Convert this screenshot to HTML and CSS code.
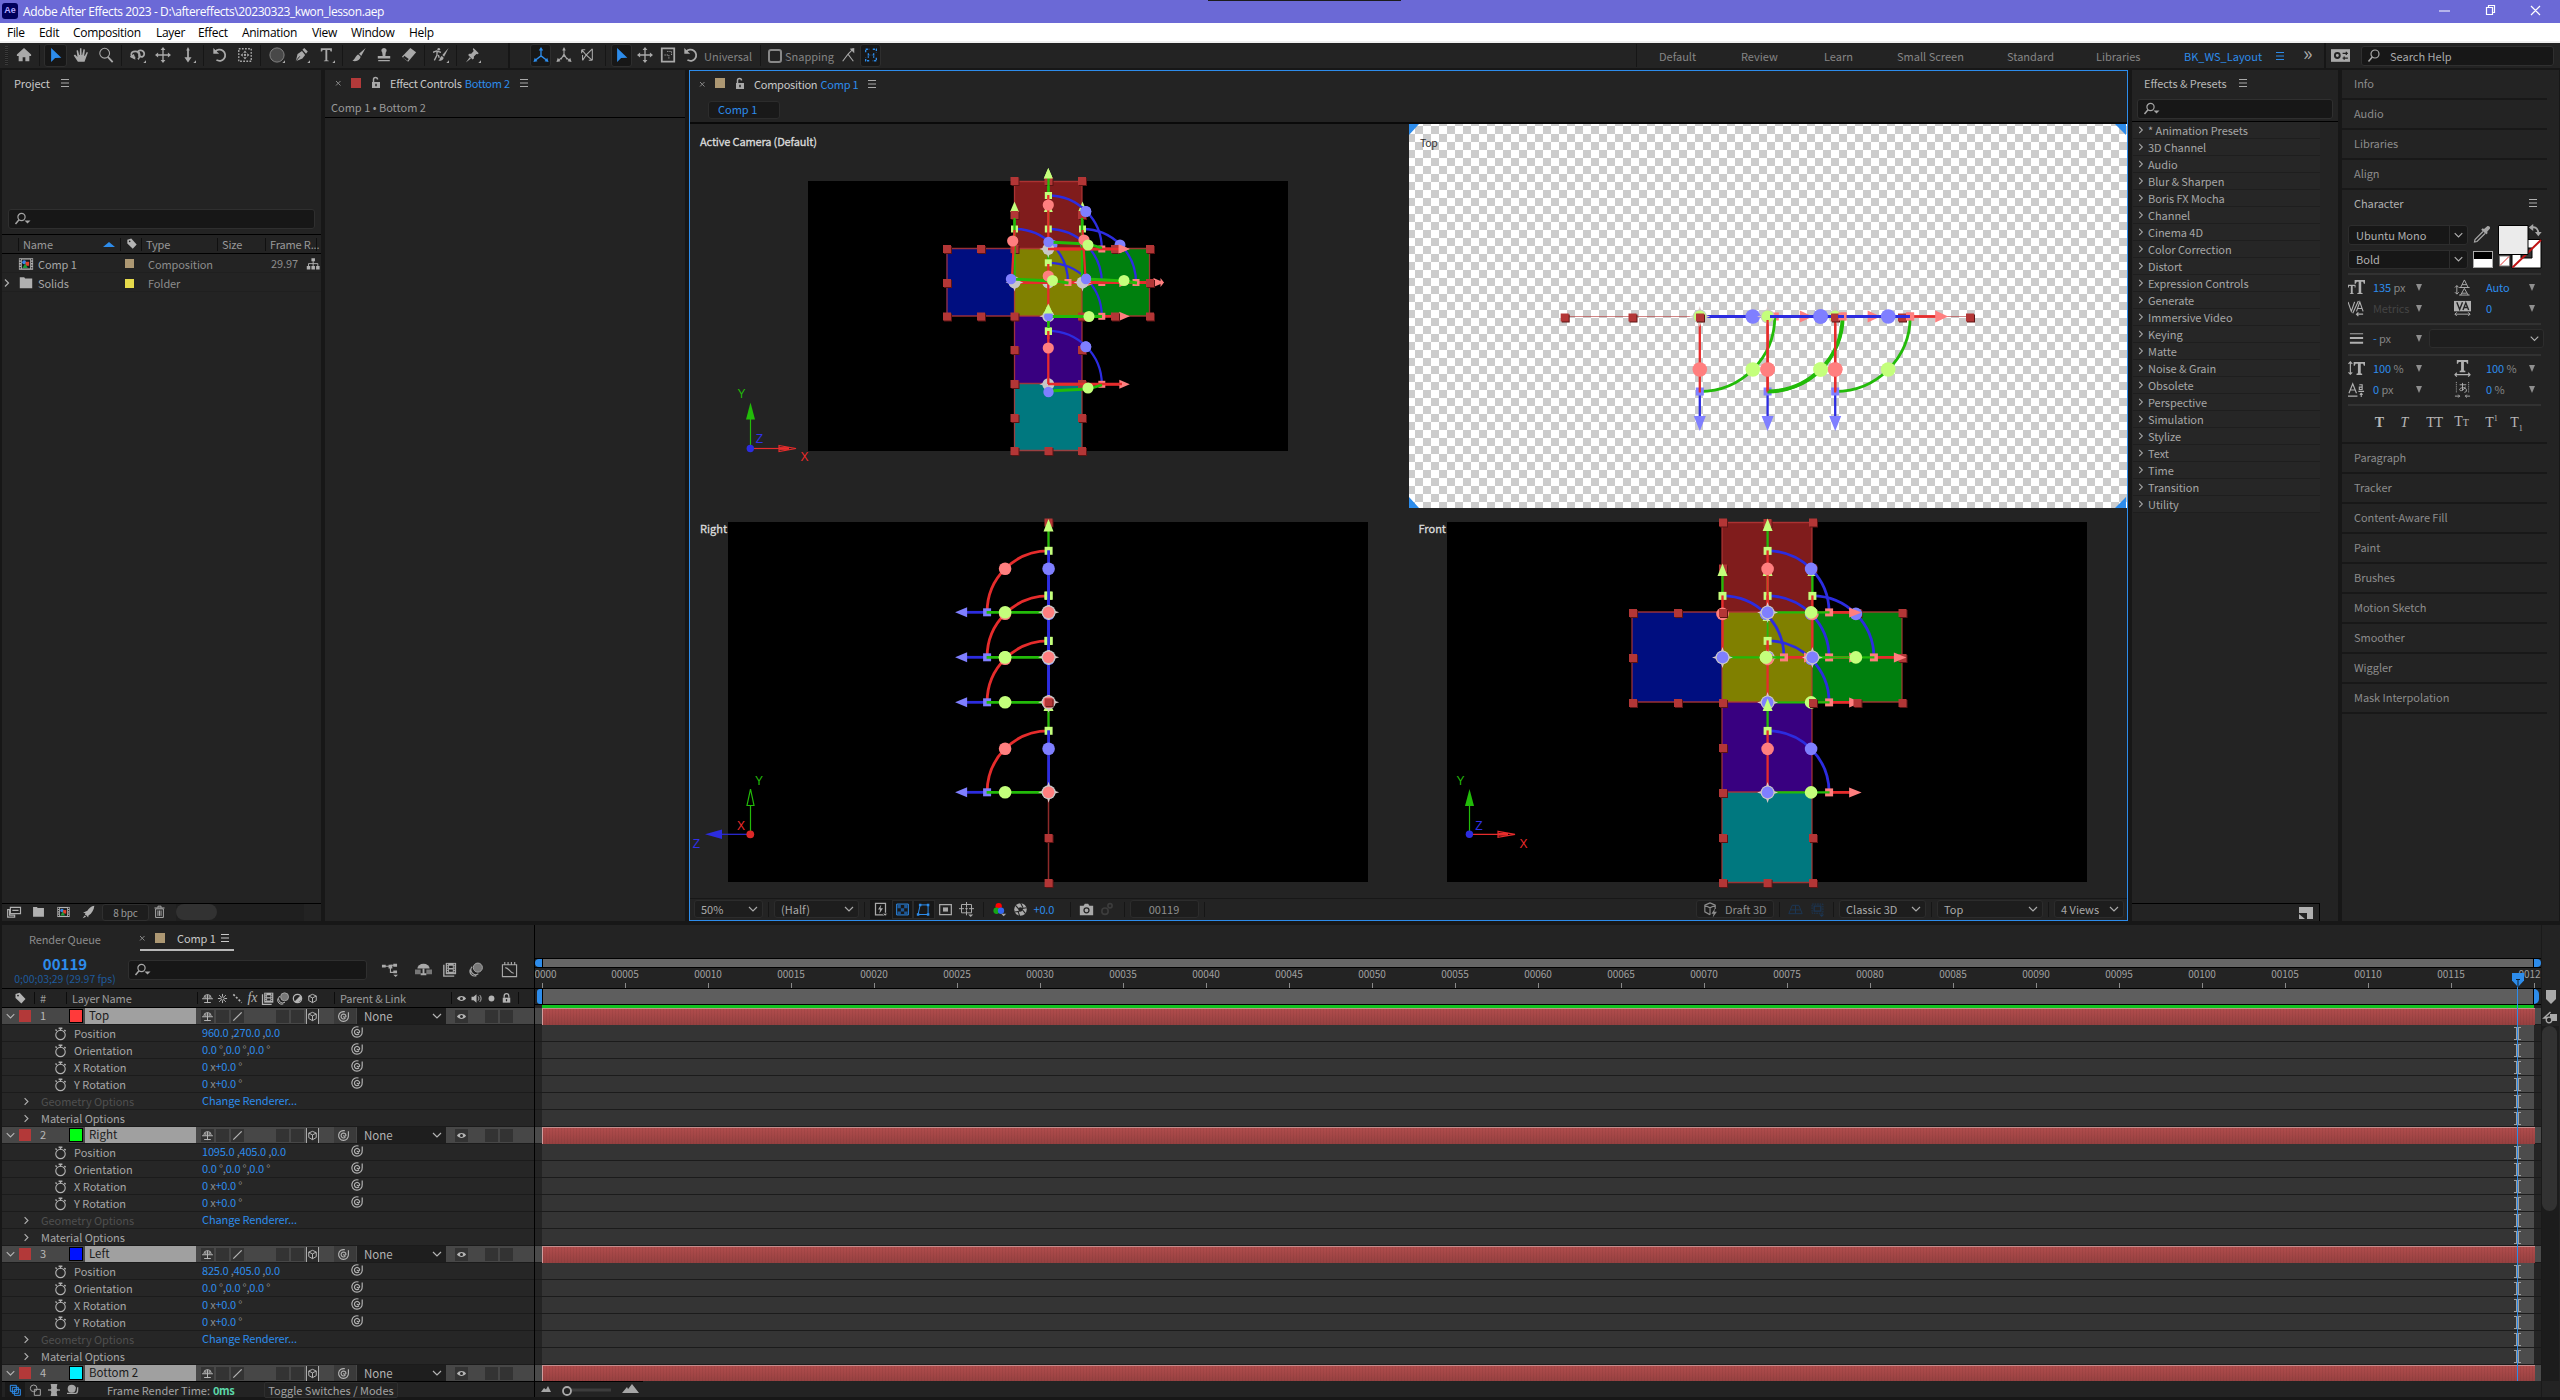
FILE: index.html
```html
<!DOCTYPE html>
<html lang="en">
<head>
<meta charset="utf-8">
<title>Adobe After Effects 2023</title>
<link rel="stylesheet" href="styles.css">
</head>
<body>
<svg class="defs" aria-hidden="true">
<defs>
<symbol id="menu" viewBox="0 0 18 18"><path d="M5 5.500h8M5 9h8M5 12.500h8" class="s"/></symbol>
<symbol id="chev-d" viewBox="0 0 18 18"><path d="M5 7l4 4 4-4" class="s w12"/></symbol>
<symbol id="chev-r" viewBox="0 0 18 18"><path d="M7 5.500l3.500 3.500L7 12.500" class="s w12"/></symbol>
<symbol id="x" viewBox="0 0 18 18"><path d="M7 7l4.500 4.500M11.500 7L7 11.500" class="s"/></symbol>
<symbol id="unlock" viewBox="0 0 18 18"><path d="M5 8h8v6H5z" class="f"/><path d="M6.500 8V5.500a2 2 0 0 1 4 0" class="s w15"/><path d="M9 9.800v2.500" stroke="#232323" stroke-width="1.500"/></symbol>
<symbol id="lock" viewBox="0 0 18 18"><path d="M4.500 8h9v6h-9z" class="f"/><path d="M6.200 8V6a2.800 2.800 0 0 1 5.600 0v2" class="s w15"/><path d="M9 9.800v2.500" stroke="#232323" stroke-width="1.500"/></symbol>
<symbol id="search" viewBox="0 0 18 18"><circle cx="8.500" cy="7" r="3.600" class="s w12"/><path d="M6 9.800L2.500 14" class="s w15"/><path d="M11.500 10.500h6l-3 3z" class="f"/></symbol>
<symbol id="search2" viewBox="0 0 18 18"><circle cx="10" cy="7" r="4" class="s w12"/><path d="M7.300 10L3.500 14.500" class="s w15"/></symbol>
<symbol id="home" viewBox="0 0 18 18"><path d="M9 1L1 8.500V10h2v6h4.500v-4.500h3V16H15v-6h2V8.500z" class="f"/></symbol>
<symbol id="arrow" viewBox="0 0 18 18"><path d="M3.500 1v16l4.500-4.500L15 12z" class="f"/></symbol>
<symbol id="hand" viewBox="0 0 18 18"><path d="M5.500 16.500L.8 9.500l1.500-1L5 11.300 4 4l1.600-.3L7 9h.6L7.800 1.500h1.700L9.700 9h.6l1.500-6.500 1.600.4L12.600 9.700l.6.300 2.200-4.500 1.400.7-2.300 6.300-1.500 4z" class="f"/></symbol>
<symbol id="zoom" viewBox="0 0 18 18"><circle cx="7.500" cy="7" r="5.500" class="s w12"/><path d="M11 11l5.500 6" class="s w2"/></symbol>
<symbol id="orbit" viewBox="0 0 18 18"><path d="M6 12C0 12 0 5 6 5s6 6 3 9M9 7c-1-5 7-4 7 1 0 3-3 4-5 2" class="s w2"/><path d="M10 5v6M4 9l-3 2 4 2z" class="s w15"/><path d="M18 18h-3l3-3z" class="f"/></symbol>
<symbol id="move" viewBox="0 0 18 18"><path d="M9 2v14M2 9h14" class="s w15"/><path d="M9 0L6.300 3.500h5.400zM9 18l-2.700-3.500h5.400zM0 9l3.500-2.700v5.400zM18 9l-3.500-2.700v5.400z" class="f"/></symbol>
<symbol id="dolly" viewBox="0 0 18 18"><path d="M9 3v10" class="s w2"/><path d="M9 17.500L5 11.500h8zM9 0L7 4h4zM18 18h-3l3-3z" class="f"/></symbol>
<symbol id="rotate" viewBox="0 0 18 18"><path d="M3.500 5.500A6.300 6.300 0 1 1 5 14.500" class="s w2"/><path d="M1.500 1v6.500H8z" class="f"/></symbol>
<symbol id="panb" viewBox="0 0 18 18"><path d="M2 2h14v14H2z" class="s w15" stroke-dasharray="2 1.500"/><path d="M9 4l2 2.500H7zM9 14l2-2.500H7zM4 9l2.500-2v4zM14 9l-2.500-2v4z" class="f"/><circle cx="9" cy="9" r="1.300" class="f"/></symbol>
<symbol id="ellipse" viewBox="0 0 18 18"><circle cx="9" cy="9" r="8" fill="#484848" stroke="#8a8a8a"/><path d="M18 18h-3l3-3z" class="f"/></symbol>
<symbol id="pen" viewBox="0 0 18 18"><path d="M2 16l2-8 5-3.500L12.500 9 9.500 13z" class="f"/><path d="M9.500 3l2-2 4 4-2 2.500z" class="f"/><path d="M2 16l4.500-5.500" stroke="#232323"/><path d="M18 18h-3l3-3z" class="f"/></symbol>
<symbol id="type" viewBox="0 0 18 18"><path d="M2 1.500h12.500V5H13l-.6-1.700H9.300v11.500l1.700.6V16H5.500v-.6l1.700-.6V3.300H4.100L3.500 5H2zM18 18h-3l3-3z" class="f"/></symbol>
<symbol id="brush" viewBox="0 0 18 18"><path d="M16.500 1L9 7.500l2.500 2.500zM8.300 8.500c-3 .5-3 5-6.800 7C7 17 10.500 14 10.800 11z" class="f"/></symbol>
<symbol id="stamp" viewBox="0 0 18 18"><path d="M9 1a3 3 0 0 1 2 5.200L10.500 10H16v3H2v-3h5.500L7 6.200A3 3 0 0 1 9 1zM2.500 14.500h13V16h-13z" class="f"/></symbol>
<symbol id="eraser" viewBox="0 0 18 18"><path d="M10.500 1L17 6 8 16.500 1 11z" class="f"/><path d="M3 11l5 3.500" stroke="#232323" stroke-width="2.500"/></symbol>
<symbol id="roto" viewBox="0 0 18 18"><path d="M17.500 1L10.500 9l2 2zM10 10c-2 .5-2 4-4 5.500 3 .5 6-1.500 6-3.500zM18 18h-3l3-3z" class="f"/><circle cx="6.500" cy="2.500" r="1.500" class="f"/><path d="M0 6l4-1.500L9 6M4.500 5v4L1.500 15M6 9l1 3" class="s w15"/></symbol>
<symbol id="pin" viewBox="0 0 18 18"><path d="M9.500 1l6 6-1.500 1.200-1.200-.4-2.800 3V13L8.500 14.200 3.500 9l1.300-1.500H7l2.800-3-1-1.700zM5.200 11.500l1.500 1.500L1 17.500zM18 18h-3l3-3z" class="f"/></symbol>
<symbol id="axis" viewBox="0 0 18 18"><path d="M9 10V3M9 10l-6.500 5M9 10l6.500 5" class="s w15"/><path d="M9 0L6.500 4h5zM.5 17l1.500-5 3 4zM17.500 17L16 12l-3 4z" class="f"/></symbol>
<symbol id="axis2" viewBox="0 0 18 18"><path d="M9 10V2M9 10l-6.500 5M9 10l6.500 5M9 8L5.500 14M9 8l3.500 6" class="s w12"/><path d="M9 0L7 4h4zM.5 17L2 12l3 4zM17.500 17L16 12l-3 4z" class="f"/></symbol>
<symbol id="axis3" viewBox="0 0 18 18"><path d="M3 3l5 6-4 6M15 2l-7 7 7 6M3 3h4M3 3v4M15 2v13M11 15h4M4 15V9" class="s w12"/></symbol>
<symbol id="scale" viewBox="0 0 18 18"><path d="M2 1.500h14v15H2z" class="s w2"/><path d="M5 9h5v5M8 5h5v4" class="s" stroke-dasharray="1.500 1"/></symbol>
<symbol id="snap1" viewBox="0 0 18 18"><path d="M3 16l6-8 6 8M9 8l6-6" class="s w12"/><path d="M16 1v6l-5-5z" class="f"/></symbol>
<symbol id="snap2" viewBox="0 0 18 18"><path d="M3 6V2.500h4M11 2.500h4V6M15 12v3.500h-4M7 15.500H3V12M6 7v2h2M12 7v2h-2M6 12v-1.500M12 12v-1.500" class="s w15" stroke-dasharray="2.500 1"/></symbol>
<symbol id="wsicon" viewBox="0 0 18 18"><path d="M0 3h18v12H0z" class="f"/><circle cx="6" cy="9" r="2.300" fill="none" stroke="#232323" stroke-width="1.800"/><path d="M11 7h5M11 11.500h5M14.500 5.500v3M12.500 10v3" stroke="#232323" stroke-width="1.200"/></symbol>
<symbol id="tag" viewBox="0 0 18 18"><path d="M3 3.500L8 2l7 7.500-5 5.500L3 8.500z" class="f"/><circle cx="6" cy="5.500" r="1.100" fill="#232323"/></symbol>
<symbol id="flow" viewBox="0 0 18 18"><path d="M7 1.500h4.500v4H7zM1 11.500h4.500v4.500H1zM7 11.500h4.500v4.500H7zM13 11.500h4.500v4.500H13z" class="f"/><path d="M9.200 5v7M3.200 12V8.500h12V12" class="s w12"/></symbol>
<symbol id="film" viewBox="0 0 18 18"><path d="M1 2.500h16v13H1z" class="f"/><path d="M2.500 3.500v11M15.500 3.500v11" stroke="#232323" stroke-width="1.300" stroke-dasharray="1.500 1.500"/><path d="M4.300 4h9.400v10H4.300z" fill="#1a1a1a"/><circle cx="7" cy="7" r="2.200" fill="#3a86e8"/><path d="M8.500 6.500h4v4.500h-4z" fill="#e0402a"/><path d="M8 8.500l3 5H5z" fill="#1c9a3c"/></symbol>
<symbol id="folder" viewBox="0 0 18 18"><path d="M2 2.500h5l1 1.500h8v11H2z" class="f"/></symbol>
<symbol id="interp" viewBox="0 0 18 18"><path d="M5 3h13v8H5z" class="s w15"/><path d="M7.500 7h8M1.500 6v9.500h9V13H4V6z" class="s w15"/></symbol>
<symbol id="rocket" viewBox="0 0 18 18"><path d="M16.500 1c-4 .5-7 3-9 6.500L2 10l3 .5L4.500 13l2 .5 2 2.500.5-2.500C13.500 11 16 6 16.500 1zM4 13.500L1.500 17 6 15z" class="f"/></symbol>
<symbol id="trash" viewBox="0 0 18 18"><path d="M4 5h10v11H4zM2.500 3.800h13M7 3.500v-2h4v2M7 7v7M9 7v7M11 7v7" class="s w12"/></symbol>
<symbol id="shy" viewBox="0 0 18 18"><path d="M4.500 8.800a4.500 4.500 0 0 1 9 0M2.500 9.300h13M9 4.500v10M5 13.800h8M7 9V6M11 9V6" class="s w12"/></symbol>
<symbol id="shyb" viewBox="0 0 18 18"><path d="M2.500 8a6.500 5 0 0 1 13 0z" class="f"/><path d="M0 9h6v5H0zM12 9h6v5h-6z" fill="#777"/><path d="M9 8v6M6 14h6" class="s w2"/></symbol>
<symbol id="sun" viewBox="0 0 18 18"><circle cx="9" cy="9" r="2" class="s w12"/><path d="M9 3.500v3M9 11.500v3M3.500 9h3M11.500 9h3M5 5l2 2M11 11l2 2M5 13l2-2M11 7l2-2" class="s w12"/></symbol>
<symbol id="dash" viewBox="0 0 18 18"><path d="M4 4l10 10" class="s w2" stroke-dasharray="2.500 2"/></symbol>
<symbol id="slash" viewBox="0 0 18 18"><path d="M4 14L14 4" class="s w15"/></symbol>
<symbol id="frames" viewBox="0 0 18 18"><path d="M5 2h11v12H5z" class="f"/><path d="M7 3v10M14 3v10" stroke="#232323" stroke-dasharray="1.500 1"/><path d="M8.500 5h4v2.500h-4zM8.500 9h4v2.500h-4z" fill="#232323"/><path d="M3 4v12h11" class="s w15"/></symbol>
<symbol id="blur" viewBox="0 0 18 18"><circle cx="11.500" cy="7" r="4.800" fill="#777" stroke="#aaa"/><path d="M5.500 6a5 5 0 0 0 6.500 7.500M3.500 9a5 5 0 0 0 6.500 6.500" class="s w12"/></symbol>
<symbol id="adj" viewBox="0 0 18 18"><circle cx="9" cy="9" r="5" class="s w15"/><path d="M12.500 5.500a5 5 0 0 1-7 7z" class="f"/></symbol>
<symbol id="cube" viewBox="0 0 18 18"><path d="M9 4l4.500 2v5.500L9 14l-4.500-2.500V6zM4.500 6L9 8.300 13.500 6M9 8.300V14" class="s w12"/></symbol>
<symbol id="eye" viewBox="0 0 18 18"><path d="M3.500 9C6 5 12 5 14.500 9 12 13 6 13 3.500 9z" class="f"/><circle cx="9" cy="9" r="1.800" fill="#282828"/></symbol>
<symbol id="speaker" viewBox="0 0 18 18"><path d="M3 7h2.500L9 4v10L5.500 11H3z" class="f"/><path d="M11 6.500c1 1 1 4 0 5M13 5c2 2 2 6 0 8" class="s w12"/></symbol>
<symbol id="dot" viewBox="0 0 18 18"><circle cx="9" cy="9" r="3.500" class="f"/></symbol>
<symbol id="spiral" viewBox="0 0 18 18"><path d="M10.500 4A5.200 5.200 0 1 0 14.200 8.500V4.500M11 10.800a2.600 2.600 0 1 1 .6-2.300c.1 1.700-2.500 1.700-2.500.3" class="s w12"/></symbol>
<symbol id="watch" viewBox="0 0 18 18"><circle cx="9" cy="10.500" r="5" class="s w12"/><path d="M7 3.500h4M9 3.500V6M13 5.500l1.500 1M5 6L3.700 4.800" class="s w15"/></symbol>
<symbol id="graph" viewBox="0 0 18 18"><path d="M1.500 4h15v12.500h-15zM4 4V1M7.500 4V1M11 4V1M14.500 4V1M4.500 7c4 0 5 6 9 6" class="s w12"/></symbol>
<symbol id="mini" viewBox="0 0 18 18"><path d="M3 5.500h7M10 6V12h5M10 4.500h6" class="s w12"/><path d="M1 4h4v3H1zM8 4h4v4H8zM13 3h4v3h-4zM13 10h4v3h-4zM13 14.500h5l-2.500 2.500z" class="f"/></symbol>
<symbol id="fast" viewBox="0 0 18 18"><path d="M3 1.500h12v14H3z" class="s w15"/><path d="M10 3L6 9h2.500L7.500 14l4.500-6.500H9z" class="f"/><path d="M11 13.500h7l-3.500 3.500z" class="f" stroke="#171717"/></symbol>
<symbol id="checkers" viewBox="0 0 18 18"><path d="M2 2.500h14v13H2z" class="s w12"/><path d="M3 3.500h4v4H3zM11 3.500h4v4h-4zM7 7.500h4v4H7zM3 11.500h4v3.500H3zM11 11.500h4v3.500h-4z" fill="#1d5796"/></symbol>
<symbol id="maskv" viewBox="0 0 18 18"><path d="M2.500 15L5 3.500h9.500V15z" class="s w12"/><path d="M1 13.500h3v3H1zM3.500 2h3v3h-3zM13 2h3v3h-3zM13 13.500h3v3h-3z" class="f"/></symbol>
<symbol id="roi" viewBox="0 0 18 18"><path d="M2 3h14v12H2z" class="s w15"/><path d="M6 6.500h6v5H6z" class="f"/></symbol>
<symbol id="grid" viewBox="0 0 18 18"><path d="M3 3h12v10H3zM9 0v6M9 10v6M0 8h6M12 8h6M7.500 8h3M9 6.500v3" class="s w12"/><path d="M11 15h6l-3 3z" class="f"/></symbol>
<symbol id="rgb" viewBox="0 0 18 18"><circle cx="8" cy="5" r="3.800" fill="#f00"/><circle cx="5.500" cy="10.500" r="3.800" fill="#16a616"/><circle cx="10.800" cy="10.500" r="3.800" fill="#3566ee"/><path d="M11 14h6l-3 3z" class="f"/></symbol>
<symbol id="aperture" viewBox="0 0 18 18"><circle cx="9" cy="9" r="7.500" class="f"/><path d="M9 1l3 6M16 7l-6.500 1M15 14l-4-5M8 17l-2-6M2 12l6-1M3 4l4 4.500" stroke="#232323" stroke-width="1.300"/><circle cx="9" cy="9" r="2.600" fill="#232323"/></symbol>
<symbol id="camera" viewBox="0 0 18 18"><path d="M1 4.500h4.500L7 2h4l1.500 2.500H17V16H1z" class="f"/><circle cx="9" cy="10" r="3" fill="none" stroke="#232323" stroke-width="1.500"/></symbol>
<symbol id="snapview" viewBox="0 0 18 18"><circle cx="6" cy="11" r="3.800" class="s w2"/><circle cx="12" cy="4.500" r="2.500" class="s w2"/></symbol>
<symbol id="draft" viewBox="0 0 18 18"><path d="M8.500 2.500L14 5v4M8.500 2.500L3 5v7l5.500 3M3 5l5.500 2.700L14 5M8.500 7.700V15" class="s w12"/><path d="M14 8l-4 6h2.300l-1 4 4.500-6H13z" class="f"/></symbol>
<symbol id="floor" viewBox="0 0 18 18"><path d="M5 4h8l4 10H1zM9 4v10M3 9.500h12" class="s w12"/></symbol>
<symbol id="ext" viewBox="0 0 18 18"><path d="M2.500 2.500h13v11h-13z" class="s w12" stroke-dasharray="2 1"/><path d="M5 5h8v6H5z" class="s w15"/><path d="M11 15h6l-3 3z" class="f"/></symbol>
<symbol id="dropper" viewBox="0 0 18 18"><path d="M11 4l3.500-3a2 2 0 0 1 2.500 2.500L14 7l.8 1-1.600 1.300-5-4.500L9.700 3.300z" class="f"/><path d="M10 6.500l-8 8L1.500 17l2.500-.5 8-8" class="s w12"/></symbol>
<symbol id="swap" viewBox="0 0 18 18"><path d="M6 5c4-1 7 2 6.500 7" class="s w2"/><path d="M2 5l5-4v8zM9 10h7.500L12.700 15z" class="f"/></symbol>
<symbol id="copyb" viewBox="0 0 18 18"><path d="M2 2h9v9H2zM5 5h9v9H5zM8 8h9v9H8z" class="s w15"/></symbol>
<symbol id="over" viewBox="0 0 18 18"><circle cx="7" cy="6.500" r="5" class="s w15"/><path d="M8 8h9v9H8z" class="s w15"/></symbol>
<symbol id="brace" viewBox="0 0 18 18"><path d="M4 0h10l-1 6 1.500 3L13 12l1 6H4l1-6L3.500 9 5 6z" class="f"/><path d="M0 9h18" class="s w2"/></symbol>
<symbol id="snail" viewBox="0 0 18 18"><circle cx="7" cy="7" r="6" class="f"/><path d="M0 14h13c3 0 3-3 3-9M12 4v3" class="s w2"/></symbol>
<symbol id="tT" viewBox="0 0 18 18"><path d="M0 6h8v3H7V7.500H5V15h1v1H2v-1h1V7.500H1V9H0zM7 1h11v4h-1.200L16 3h-2v11.500l1.500.5v1H9.800v-1l1.500-.5V3h-2L8.200 5H7z" class="f"/></symbol>
<symbol id="va" viewBox="0 0 18 18"><path d="M0 2l3.500 10L7 2M11 1L5 14M9 12l3.500-10L16 12M10 9h5M9 15h7M11 13l-2 2 2 2" class="s w12"/></symbol>
<symbol id="leading" viewBox="0 0 18 18"><path d="M7 9l4-8 4 8M8.500 6h5M7 17l4-7 4 7M8.500 15h5M5.500 9h11M5.500 17h11M3 7v9M1 9l2-2 2 2M1 14l2 2 2-2" class="s"/></symbol>
<symbol id="track" viewBox="0 0 18 18"><path d="M0 1h18v11H0z" class="f"/><path d="M3 2.500l3 7.500 3-7.500M9.500 10.500l3-7.500 3 7.500M10.500 8h4" stroke="#232323" fill="none" stroke-width="1.500"/><path d="M1 15h16M3 13l-2 2 2 2M15 13l2 2-2 2" class="s"/></symbol>
<symbol id="lines" viewBox="0 0 18 18"><path d="M2 4h14" class="s"/><path d="M2 8.500h14M2 13.500h14" class="s w2"/></symbol>
<symbol id="vscale" viewBox="0 0 18 18"><path d="M2.500 2v13M.5 4l2-2 2 2M.5 13l2 2 2-2" class="s w12"/><path d="M6 2h12v4h-1.200L16 4h-2.500v10l1.500.5V16H9v-1.500l1.500-.5V4H8L7.200 6H6z" class="f"/></symbol>
<symbol id="hscale" viewBox="0 0 18 18"><path d="M3 0h12v4h-1.200L13 2h-2.500v9l1.500.5V13H6v-1.500l1.500-.5V2H5l-.8 2H3z" class="f"/><path d="M1 15.500h16M3 13.500l-2 2 2 2M15 13.500l2 2-2 2" class="s w12"/></symbol>
<symbol id="base" viewBox="0 0 18 18"><path d="M1 13L5 3l4 10M2.500 9.500h5M0 16h10M12 4h3v5h-3V6.500h3M11 11h6M14 17v-4M12.500 14.500L14 13l1.500 1.500" class="s w12"/></symbol>
<symbol id="tsume" viewBox="0 0 18 18"><path d="M6 4h7M9 2v8M12 6c-2 5-6 5-6 3s6-3 7 0-2 3-2 3" class="s"/><path d="M2.500 1v12M15.500 1v12" class="s" stroke-dasharray="1 1"/><path d="M1 16h5M17 16h-5M4.500 14.500L6 16l-1.500 1.500M13.500 14.500L12 16l1.500 1.500" class="s"/></symbol>
<g id="org"><path d="M0-10.500L1.500-6H-1.500zM0 10.500L1.500 6H-1.500zM-10.500 0L-6-1.500V1.500zM10.500 0L6-1.500V1.500z" fill="#d9c6c6"/><circle r="7" fill="#c8c8c8"/></g>
<g id="hd"><path d="M-3-3h8v8h-8z" fill="#5c1414"/><path d="M-4-4h8v8h-8z" fill="#b33636"/></g>
<g id="gzf">
<path d="M0-61.500V-83" class="g2"/><path d="M-5-81.500L0-94 5-81.500z" class="lime"/>
<path d="M0-61.500A61.500 61.500 0 0 1 61.500 0" class="b3"/>
<path d="M61.500 0H83" class="r3"/><path d="M81.500-5L94 0 81.500 5z" class="pink"/>
<path d="M-4-65.500h8v8h-8z" class="lime"/><path d="M57.500-4h8v8h-8z" class="pink"/>
<path d="M0-62V0" class="r2"/><path d="M0 0H62" class="g2"/>
<circle cy="-43.500" r="6.300" class="pink"/><circle cx="43.500" cy="-43.500" r="6.300" class="peri"/><circle cx="43.500" r="6.300" class="lime"/>
<use href="#org"/><circle r="5.800" class="peri"/></g>
<g id="gzr">
<path d="M0-61.500A61.500 61.500 0 0 0-61.500 0" class="r3"/>
<path d="M-61.500 0H-83" class="b3"/><path d="M-81.500-5L-93.500 0-81.500 5z" class="peri"/>
<path d="M-4-65.500h8v8h-8z" class="lime"/><path d="M-65.500-4h8v8h-8z" class="peri"/>
<path d="M0-62V0" class="b3"/><path d="M0 0H-62" class="g3"/>
<circle cx="-43.500" cy="-43.500" r="6.300" class="pink"/><circle cy="-43.500" r="6.300" class="peri"/><circle cx="-43.500" r="6.300" class="lime"/>
<use href="#org"/><circle r="5.800" class="pink"/></g>
<g id="gzt">
<path d="M75 0H102" class="r3"/><path d="M100-6L113 0 100 6z" class="pink"/><path d="M71-4h8v8h-8z" class="pink"/>
<path d="M0 75A75 75 0 0 0 75 0" class="g3"/>
<path d="M0 75V100" class="b2"/><path d="M-6 99.500L0 114.500 6 99.500z" class="peri"/><path d="M-4 71h8v8h-8z" class="peri"/>
<path d="M0 0V76" class="r2"/><path d="M0 0H76" class="b3"/>
<circle cy="53" r="7.300" class="pink"/><circle cx="53" cy="53" r="7.300" class="lime"/><circle cx="53" r="7.300" class="peri"/>
<use href="#org"/><circle r="6" class="lime"/></g>
<g id="gzc">
<path d="M0-53.500V-72" class="g2"/><path d="M-4.500-70.500L0-81 4.500-70.500z" class="lime"/>
<path d="M0-53.500A53.500 53.500 0 0 1 53.500 0" class="b2"/>
<path d="M0 0H72" class="r3"/><path d="M71-4.500L81.500 0 71 4.500z" class="pink"/>
<path d="M-3.500-57h7v7h-7z" class="lime"/><path d="M50-3.500h7v7h-7z" class="pink"/>
<circle cx="37.500" cy="-37.500" r="5.500" class="peri"/><use href="#org" transform="scale(.85)"/></g>
</defs>
</svg>

<header class="titlebar">
  <span class="ae">Ae</span>
  <span class="title">Adobe After Effects 2023 - D:\aftereffects\20230323_kwon_lesson.aep</span>
  <span class="topmark"></span>
  <svg class="winbtns" viewBox="0 0 110 20"><path d="M4 11h11M51.500 7.500h6v7h-6zM53.500 7V5.500h6v7H58M96 6l9 9M105 6l-9 9" fill="none" stroke="#fff" stroke-width="1.200"/></svg>
</header>
<nav class="menubar"><span class="m1">File</span><span class="m2">Edit</span><span class="m3">Composition</span><span class="m4">Layer</span><span class="m5">Effect</span><span class="m6">Animation</span><span class="m7">View</span><span class="m8">Window</span><span>Help</span></nav>

<div class="toolbar">
  <span class="grip"></span>
  <span class="tool first"><svg><use href="#home"/></svg></span><i class="sep"></i>
  <span class="tool on"><svg><use href="#arrow"/></svg></span><span class="tool"><svg><use href="#hand"/></svg></span><span class="tool"><svg><use href="#zoom"/></svg></span><i class="sep"></i>
  <span class="tool"><svg><use href="#orbit"/></svg></span><span class="tool"><svg><use href="#move"/></svg></span><span class="tool"><svg><use href="#dolly"/></svg></span><i class="sep"></i>
  <span class="tool"><svg><use href="#rotate"/></svg></span><span class="tool"><svg><use href="#panb"/></svg></span><i class="sep"></i>
  <span class="tool"><svg><use href="#ellipse"/></svg></span><span class="tool"><svg><use href="#pen"/></svg></span><span class="tool"><svg><use href="#type"/></svg></span><i class="sep"></i>
  <span class="tool"><svg><use href="#brush"/></svg></span><span class="tool"><svg><use href="#stamp"/></svg></span><span class="tool"><svg><use href="#eraser"/></svg></span><i class="sep"></i>
  <span class="tool"><svg><use href="#roto"/></svg></span><i class="sep"></i>
  <span class="tool"><svg><use href="#pin"/></svg></span><i class="sep far"></i>
  <span class="tool sm on axisbox"><svg><use href="#axis"/></svg></span><span class="tool sm"><svg><use href="#axis2"/></svg></span><span class="tool sm"><svg><use href="#axis3"/></svg></span><i class="sep mid"></i>
  <span class="tool sm on"><svg><use href="#arrow"/></svg></span><span class="tool sm"><svg><use href="#move"/></svg></span><span class="tool sm"><svg><use href="#scale"/></svg></span><span class="tool sm"><svg><use href="#rotate"/></svg></span>
  <span class="tlabel univ">Universal</span><i class="sep"></i>
  <span class="check"></span><span class="tlabel snapl">Snapping</span>
  <span class="tool sm"><svg><use href="#snap1"/></svg></span><span class="tool sm on"><svg><use href="#snap2"/></svg></span>
  <div class="spaces"><span class="w1">Default</span><span class="w2">Review</span><span class="w3">Learn</span><span class="w4">Small Screen</span><span class="w5">Standard</span><span class="w6">Libraries</span><span class="w7 blue">BK_WS_Layout</span><svg class="blue"><use href="#menu"/></svg><span class="more">»</span></div>
  <span class="wsi"><svg><use href="#wsicon"/></svg></span>
  <div class="helpbox"><svg><use href="#search2"/></svg><span>Search Help</span></div>
</div>

<main class="work">
  <section class="panel project">
    <div class="tabs"><span class="pl">Project</span><svg class="icon"><use href="#menu"/></svg></div>
    <div class="searchbox"><svg><use href="#search"/></svg></div>
    <div class="pgrid phead"><span></span><span class="vb">Name</span><span class="sortcell"><i class="sort"></i></span><span class="vb"><svg><use href="#tag"/></svg></span><span class="vb">Type</span><span class="vb">Size</span><span class="vb">Frame R...</span><span class="vb"></span></div>
    <div class="pgrid prow"><span></span><span class="nm"><svg class="s14"><use href="#film"/></svg>Comp 1</span><span></span><span class="ctr"><i class="sw tan"></i></span><span class="ty">Composition</span><span></span><span class="num">29.97</span><span><svg><use href="#flow"/></svg></span></div>
    <div class="pgrid prow"><span><svg class="cr"><use href="#chev-r"/></svg></span><span class="nm"><svg class="s14"><use href="#folder"/></svg>Solids</span><span></span><span class="ctr"><i class="sw yel"></i></span><span class="ty">Folder</span><span></span><span></span><span></span></div>
    <div class="fillspace"></div>
    <div class="pfoot"><svg><use href="#interp"/></svg><svg><use href="#folder"/></svg><svg><use href="#film"/></svg><svg><use href="#rocket"/></svg><span class="bpc">8 bpc</span><svg><use href="#trash"/></svg><span class="ptrack"><i></i></span></div>
  </section>

  <section class="panel effctl">
    <div class="tabs"><svg class="icon cx"><use href="#x"/></svg><i class="sw red big"></i><svg class="icon lk"><use href="#unlock"/></svg><span class="t">Effect Controls <b>Bottom 2</b></span><svg class="icon"><use href="#menu"/></svg></div>
    <div class="ecsub">Comp 1 • Bottom 2</div>
  </section>

  <section class="panel comp">
    <div class="tabs"><svg class="icon cx"><use href="#x"/></svg><i class="sw tan big"></i><svg class="icon lk"><use href="#unlock"/></svg><span class="t">Composition <b>Comp 1</b></span><svg class="icon"><use href="#menu"/></svg></div>
    <div class="csub"><span>Comp 1</span></div>
    <div class="views">
      <svg class="view" viewBox="690 124 719 386">
        <path d="M808 181h480v270H808z" fill="#000"/>
        <path d="M1014 181h68v68h-68z" fill="#801c1c"/><path d="M946.500 248.500H1014V316h-67.500z" fill="#000e80"/><path d="M1014 248.500h68V316h-68z" fill="#808000"/><path d="M1082 248.500h67.500V316H1082z" fill="#00800e"/><path d="M1014 316h68v67.500h-68z" fill="#380080"/><path d="M1014 383.500h68V451h-68z" fill="#00787f"/>
        <path d="M1014.500 181.500h67.500v269h-67.500zM947 248.500h202.500V316H947zM1014.500 383.500H1082" class="edge"/>
        <use href="#gzc" x="1048.300" y="282.500"/><use href="#gzc" x="1048.300" y="316.300"/><use href="#gzc" x="1014.500" y="282.500"/><use href="#gzc" x="1082.500" y="282.500"/><use href="#gzc" x="1048.300" y="249"/><use href="#gzc" x="1048.300" y="384.300"/>
        <use href="#hd" x="1014.500" y="181"/><use href="#hd" x="1048.500" y="181"/><use href="#hd" x="1082" y="181"/><use href="#hd" x="1014.500" y="215"/><use href="#hd" x="1082" y="215"/><use href="#hd" x="947" y="249"/><use href="#hd" x="981" y="249"/><use href="#hd" x="1014.500" y="249"/><use href="#hd" x="1115" y="249"/><use href="#hd" x="1150" y="249"/><use href="#hd" x="947" y="283"/><use href="#hd" x="1150" y="283"/><use href="#hd" x="947" y="316.500"/><use href="#hd" x="981" y="316.500"/><use href="#hd" x="1014.500" y="316.500"/><use href="#hd" x="1082" y="316.500"/><use href="#hd" x="1115" y="316.500"/><use href="#hd" x="1150" y="316.500"/><use href="#hd" x="1014.500" y="350"/><use href="#hd" x="1082" y="350"/><use href="#hd" x="1014.500" y="384"/><use href="#hd" x="1082" y="384"/><use href="#hd" x="1014.500" y="418"/><use href="#hd" x="1082" y="418"/><use href="#hd" x="1014.500" y="451"/><use href="#hd" x="1048.500" y="451"/><use href="#hd" x="1082" y="451"/>
        <path d="M1048.500 178v14M1014.500 218v60M1082 218v60M1048.500 312v16" class="g2"/>
        <path d="M1043.800 178.500L1048.300 168l4.500 10.500z" class="lime"/>
        <path d="M1048.300 196v50M1014.500 230L1012 278M1082.500 230l3 48M1048.300 264v48M1048.300 332v52M1048 249h74M1048 384h74" class="r2"/>
        <path d="M1048 242l40 2 14 4M1011 279l41.500 2 16 2M1086 279l38 2 13 2M1048 316.500h54M1048 391l40-2 14-4" class="g3"/>
        <path d="M1118.500 244.500l11 4.500-11 4.500zM1160.500 278l3.500 4.500-3.500 4.500z" class="pink"/><path d="M1045 192h7v7h-7zM1045 328h7v7h-7z" class="lime"/>
        <path d="M1048.300 195v6M1048.300 331v8" class="r2"/>
        <g class="pink"><circle cx="1048.300" cy="205" r="5.600"/><circle cx="1012.700" cy="241" r="5.600"/><circle cx="1084" cy="240" r="5.600"/><circle cx="1048.300" cy="276" r="5.600"/><circle cx="1048.300" cy="348" r="5.600"/></g>
        <g class="lime"><circle cx="1088" cy="245" r="5.500"/><circle cx="1052.500" cy="280.500" r="5.500"/><circle cx="1124" cy="280.500" r="5.500"/><circle cx="1089" cy="316.500" r="5.500"/><circle cx="1088" cy="388" r="5.500"/></g>
        <g class="peri"><circle cx="1085.800" cy="211.500" r="5.500"/><circle cx="1085.800" cy="346.800" r="5.500"/><circle cx="1048.500" cy="242" r="5.200"/><circle cx="1011" cy="279" r="5.200"/><circle cx="1086" cy="279" r="5.200"/><circle cx="1048.500" cy="316.500" r="4.500"/><circle cx="1048.500" cy="392" r="5.200"/></g>
        <path d="M1043.800 313.500l4.500-10 4.500 10z" class="lime"/>
        <path d="M750.500 446V419" class="g1"/><path d="M746 419.500l4.500-17 4.500 17z" fill="#22bb09"/><path d="M754 448.500h26" class="r1"/><path d="M779 445.500l17 3-17 3z" class="r1"/><path d="M779 448.500h10" class="r3"/><circle cx="750.300" cy="448.500" r="3.700" fill="#2c2ce0"/>
        <text x="741.500" y="398" fill="#22bb09" class="ax">Y</text><text x="759.500" y="443" fill="#3030e8" class="ax">Z</text><text x="804.500" y="461" fill="#ee2b2b" class="ax">X</text>
        <text x="700" y="146" class="vname ac">Active Camera (Default)</text>
      </svg>
      <div class="topview">
      <svg class="view" viewBox="1409 124 717 384">
        <path d="M1409 124h10l-10 11zM2126 124h-11l11 11zM1409 508h10l-10-11zM2126 508h-11l11-11z" fill="#2d8ceb"/>
        <path d="M1565 316.500H1970" stroke="#b33636" stroke-opacity=".6"/>
        <use href="#gzt" x="1699.800" y="316.500"/><use href="#gzt" x="1767.600" y="316.500"/><use href="#gzt" x="1835.200" y="316.500"/>
        <path d="M1767.600 391.500A75 75 0 0 0 1842.600 316.500" class="g3 thick"/>
        <path d="M1767.600 320v71M1835.200 320v71" class="r2"/><path d="M1770 316.500h73" class="b3"/>
        <circle cx="1820.600" cy="369.500" r="7.300" class="lime"/><circle cx="1835.200" cy="369.500" r="7.300" class="pink"/><circle cx="1820.600" cy="316.500" r="7.300" class="peri"/><circle cx="1767.600" cy="369.500" r="7.300" class="pink"/>
        <use href="#hd" x="1564.700" y="317.500"/><use href="#hd" x="1632.500" y="317.500"/><use href="#hd" x="1700" y="317.500"/><use href="#hd" x="1835" y="317.500"/><use href="#hd" x="1902" y="317.500"/><use href="#hd" x="1970" y="317.500"/>
        <path d="M1838.500 312.500h8v8h-8zM1906 312.500h8v8h-8z" class="pink"/><path d="M1838 316.500h6M1898 316.500h12" class="b3"/>
        <text x="1420" y="147" class="vdark">Top</text>
      </svg>
      </div>
      <svg class="view" viewBox="690 510 719 388">
        <path d="M728 522h640v360H728z" fill="#000"/>
        <path d="M1048.500 522v360" stroke="#8c2a2a" stroke-width="1.500"/>
        <use href="#hd" x="1048.500" y="522.500"/><path d="M1048.500 551v-20M1048.500 730v-28" class="g2"/><path d="M1043.500 531.500l5-12.500 5 12.500zM1043.500 711l5-12 5 12z" class="lime"/>
        <use href="#gzr" x="1048.600" y="792.300"/><use href="#gzr" x="1048.600" y="702.300"/><use href="#gzr" x="1048.600" y="657.300"/><use href="#gzr" x="1048.600" y="612.300"/>
        <path d="M1044.500 591.500h8v8h-8zM1044.500 637h8v8h-8z" class="lime"/><path d="M1048.600 585v20M1048.600 620v30M1048.600 575v30M1048.600 665v30" class="b3"/>
        <g class="lime"><circle cx="1005" cy="657.300" r="6.300"/></g>
        <use href="#hd" x="1048.600" y="702.300"/><use href="#hd" x="1048.600" y="838"/><use href="#hd" x="1048.600" y="883"/>
        <path d="M750.500 831V806M750.500 789l-3.500 16.500h7z" class="g1"/><path d="M749 834.300H722" class="b1"/><path d="M722 829.500l-17 4.800 17 4.800z" fill="#2c2ce0"/><circle cx="750.300" cy="834.300" r="3.900" fill="#dc2828"/>
        <text x="759" y="785" fill="#22bb09" class="ax">Y</text><text x="741" y="830" fill="#ee2b2b" class="ax">X</text><text x="696.500" y="848" fill="#3030e8" class="ax">Z</text>
        <text x="700" y="532.500" class="vname">Right</text>
      </svg>
      <svg class="view" viewBox="1409 510 717 388">
        <path d="M1447 522h640v360h-640z" fill="#000"/>
        <path d="M1722 522h90v90h-90z" fill="#801c1c"/><path d="M1632 612h90v90h-90z" fill="#000e80"/><path d="M1722 612h90v90h-90z" fill="#808000"/><path d="M1812 612h90v90h-90z" fill="#00800e"/><path d="M1722 702h90v90h-90z" fill="#380080"/><path d="M1722 792h90v90h-90z" fill="#00787f"/>
        <path d="M1722 522.500h90v360h-90zM1632 612h270v90h-270zM1722 792h90" class="edge"/>
        <use href="#hd" x="1767.500" y="523"/><use href="#hd" x="1723" y="568.500"/><use href="#hd" x="1812.500" y="568.500"/><use href="#hd" x="1902.500" y="658"/><use href="#hd" x="1857.500" y="613"/>
        <use href="#gzf" x="1767.600" y="657.400"/><use href="#gzf" x="1767.600" y="702.400"/><use href="#gzf" x="1722.500" y="657.400"/><use href="#gzf" x="1812.400" y="657.400"/><use href="#gzf" x="1767.600" y="612.400"/><use href="#gzf" x="1767.600" y="792.400"/>
        <circle cx="1766" cy="657.400" r="6.300" class="lime"/>
        <use href="#hd" x="1723" y="522.500"/><use href="#hd" x="1813" y="522.500"/><use href="#hd" x="1633" y="613"/><use href="#hd" x="1678" y="613"/><use href="#hd" x="1723" y="613"/><use href="#hd" x="1902.500" y="613"/><use href="#hd" x="1633" y="658"/><use href="#hd" x="1633" y="703"/><use href="#hd" x="1678" y="703"/><use href="#hd" x="1723" y="703"/><use href="#hd" x="1813" y="703"/><use href="#hd" x="1857.500" y="703"/><use href="#hd" x="1902.500" y="703"/><use href="#hd" x="1723" y="748"/><use href="#hd" x="1723" y="793"/><use href="#hd" x="1723" y="838"/><use href="#hd" x="1813" y="838"/><use href="#hd" x="1723" y="883"/><use href="#hd" x="1767.600" y="883"/><use href="#hd" x="1813" y="883"/>
        <path d="M1469.500 831V806" class="g1"/><path d="M1465 806l4.500-17 4.500 17z" fill="#22bb09"/><path d="M1473 834.300h26M1498 831.300l17 3-17 3z" class="r1"/><path d="M1498 834.300h10" class="r3"/><circle cx="1469.400" cy="834.300" r="3.700" fill="#2c2ce0"/>
        <text x="1460.500" y="785" fill="#22bb09" class="ax">Y</text><text x="1479" y="830" fill="#3030e8" class="ax">Z</text><text x="1523.500" y="848" fill="#ee2b2b" class="ax">X</text>
        <text x="1418.500" y="532.500" class="vname">Front</text>
      </svg>
    </div>
    <div class="vfoot">
      <span class="sel s50">50%<svg><use href="#chev-d"/></svg></span><i class="sep"></i>
      <span class="sel sh">(Half)<svg><use href="#chev-d"/></svg></span><i class="sep"></i>
      <span class="vi dk"><svg><use href="#fast"/></svg></span><span class="vi on"><svg><use href="#checkers"/></svg></span><span class="vi on"><svg><use href="#maskv"/></svg></span><span class="vi"><svg><use href="#roi"/></svg></span><span class="vi"><svg><use href="#grid"/></svg></span><i class="sep"></i>
      <span class="vi"><svg><use href="#rgb"/></svg></span><span class="vi"><svg><use href="#aperture"/></svg></span><span class="exp blue">+0.0</span><i class="sep"></i>
      <span class="vi"><svg><use href="#camera"/></svg></span><span class="vi dim"><svg><use href="#snapview"/></svg></span><i class="sep"></i>
      <span class="sel frame">00119</span><i class="sep"></i>
      <span class="grow"></span>
      <span class="sel d3"><svg><use href="#draft"/></svg>Draft 3D</span><i class="sep"></i>
      <span class="vi dimb"><svg><use href="#floor"/></svg></span><span class="vi dimb"><svg><use href="#ext"/></svg></span><i class="sep"></i>
      <span class="sel c3">Classic 3D<svg><use href="#chev-d"/></svg></span><i class="sep"></i>
      <span class="sel tp">Top<svg><use href="#chev-d"/></svg></span><i class="sep"></i>
      <span class="sel v4">4 Views<svg><use href="#chev-d"/></svg></span>
    </div>
  </section>

  <section class="panel effects">
    <div class="tabs"><span class="pl">Effects &amp; Presets</span><svg class="icon"><use href="#menu"/></svg></div>
    <div class="searchbox"><svg><use href="#search"/></svg></div>
    <ul>
      <li><svg><use href="#chev-r"/></svg>* Animation Presets</li><li><svg><use href="#chev-r"/></svg>3D Channel</li><li><svg><use href="#chev-r"/></svg>Audio</li><li><svg><use href="#chev-r"/></svg>Blur &amp; Sharpen</li><li><svg><use href="#chev-r"/></svg>Boris FX Mocha</li><li><svg><use href="#chev-r"/></svg>Channel</li><li><svg><use href="#chev-r"/></svg>Cinema 4D</li><li><svg><use href="#chev-r"/></svg>Color Correction</li><li><svg><use href="#chev-r"/></svg>Distort</li><li><svg><use href="#chev-r"/></svg>Expression Controls</li><li><svg><use href="#chev-r"/></svg>Generate</li><li><svg><use href="#chev-r"/></svg>Immersive Video</li><li><svg><use href="#chev-r"/></svg>Keying</li><li><svg><use href="#chev-r"/></svg>Matte</li><li><svg><use href="#chev-r"/></svg>Noise &amp; Grain</li><li><svg><use href="#chev-r"/></svg>Obsolete</li><li><svg><use href="#chev-r"/></svg>Perspective</li><li><svg><use href="#chev-r"/></svg>Simulation</li><li><svg><use href="#chev-r"/></svg>Stylize</li><li><svg><use href="#chev-r"/></svg>Text</li><li><svg><use href="#chev-r"/></svg>Time</li><li><svg><use href="#chev-r"/></svg>Transition</li><li><svg><use href="#chev-r"/></svg>Utility</li>
    </ul>
    <div class="fillspace"></div>
    <div class="efoot"><svg viewBox="0 0 14 12"><path d="M0 0h14v12H8V6H0z" class="f"/><path d="M0 7l6 5H0z" class="f"/></svg></div>
  </section>

  <section class="panel side">
    <div class="acc">Info</div><div class="acc">Audio</div><div class="acc">Libraries</div><div class="acc">Align</div>
    <div class="acc open"><span>Character</span><svg><use href="#menu"/></svg></div>
    <div class="char">
      <div class="fontpick">
        <div class="fonts"><span class="fbox">Ubuntu Mono<svg><use href="#chev-d"/></svg></span><span class="fbox">Bold<svg><use href="#chev-d"/></svg></span></div>
        <div class="dropcol"><svg><use href="#dropper"/></svg><i class="bw"></i></div>
        <svg class="swatches" viewBox="0 0 45 44"><path d="M14 14.500h29v28.500H14z" fill="#fff" stroke="#000"/><path d="M23 23h11v10H23z" fill="#333" stroke="#000"/><path d="M14.500 42.500L43 15" stroke="#c01414" stroke-width="2"/><path d="M.5.500h29.500v29H.5z" fill="#ebebeb" stroke="#000"/><path d="M1.500 31h10v10h-10z" fill="#fff" stroke="#777"/><path d="M2 40.500L11 31.500" stroke="#d33"/><use href="#swap" x="29" y="-2" width="16" height="16"/></svg>
      </div>
      <hr>
      <div class="crow"><svg><use href="#tT"/></svg><span><b>135</b> px</span><i></i><svg><use href="#leading"/></svg><span><b>Auto</b></span><i></i></div>
      <div class="crow"><svg><use href="#va"/></svg><span class="dimt">Metrics</span><i></i><svg><use href="#track"/></svg><span><b>0</b></span><i></i></div>
      <hr>
      <div class="crow tall"><svg><use href="#lines"/></svg><span><b>-</b> px</span><i></i><span class="wide"><svg><use href="#chev-d"/></svg></span></div>
      <hr>
      <div class="crow"><svg><use href="#vscale"/></svg><span><b>100</b> %</span><i></i><svg><use href="#hscale"/></svg><span><b>100</b> %</span><i></i></div>
      <div class="crow"><svg><use href="#base"/></svg><span><b>0</b> px</span><i></i><svg><use href="#tsume"/></svg><span><b>0</b> %</span><i></i></div>
      <hr>
      <div class="tstyles"><span class="bd">T</span><span class="it">T</span><span class="caps aa">TT</span><span class="caps">T<small>T</small></span><span class="su">T<sup>1</sup></span><span>T<sub>1</sub></span></div>
    </div>
    <div class="acc">Paragraph</div><div class="acc">Tracker</div><div class="acc">Content-Aware Fill</div><div class="acc">Paint</div><div class="acc">Brushes</div><div class="acc">Motion Sketch</div><div class="acc">Smoother</div><div class="acc">Wiggler</div><div class="acc">Mask Interpolation</div>
  </section>
</main>

<section class="timeline">
  <div class="tleft">
    <div class="ttabs"><span class="rq">Render Queue</span><span class="ttab"><svg class="cx"><use href="#x"/></svg><i class="sw tan big"></i><span>Comp 1</span><svg><use href="#menu"/></svg></span></div>
    <div class="tctl">
      <div class="time"><strong>00119</strong><small>0;00;03;29 (29.97 fps)</small></div>
      <div class="searchbox"><svg><use href="#search"/></svg></div>
      <svg class="k1"><use href="#mini"/></svg><svg class="k2"><use href="#shyb"/></svg><svg class="k3"><use href="#frames"/></svg><svg class="k4"><use href="#blur"/></svg><svg class="k5"><use href="#graph"/></svg>
    </div>
    <div class="lgrid lhead"><span class="tagc"><svg><use href="#tag"/></svg></span><span class="hash vb">#</span><span class="lname vb">Layer Name</span><span class="cells vb"><svg><use href="#shy"/></svg><svg><use href="#sun"/></svg><svg><use href="#dash"/></svg><em>fx</em><svg><use href="#frames"/></svg><svg><use href="#blur"/></svg><svg><use href="#adj"/></svg><svg><use href="#cube"/></svg></span><span class="parent vb">Parent &amp; Link</span><span class="av vb"><svg><use href="#eye"/></svg><svg><use href="#speaker"/></svg><svg><use href="#dot"/></svg><svg><use href="#lock"/></svg></span><span class="vb end"></span></div>
    <div class="rows">
      <div class="layer"><svg class="cv"><use href="#chev-d"/></svg><i class="lab"></i><span class="n">1</span><i class="col c1"></i><span class="name">Top</span><span class="sws"><i><svg><use href="#shy"/></svg></i><i></i><i><svg><use href="#slash"/></svg></i><u></u><u></u><i></i><i></i><i class="cb"><svg><use href="#cube"/></svg></i></span><span class="sp"><svg><use href="#spiral"/></svg></span><span class="par">None<svg><use href="#chev-d"/></svg></span><span class="avs"><i><svg><use href="#eye"/></svg></i><u></u><i></i><i></i></span></div>
      <div class="prop"><svg><use href="#watch"/></svg><span>Position</span><b>960.0 <s>,</s>270.0 <s>,</s>0.0</b><svg class="pw"><use href="#spiral"/></svg></div>
      <div class="prop"><svg><use href="#watch"/></svg><span>Orientation</span><b>0.0<s> °,</s>0.0<s> °,</s>0.0<s> °</s></b><svg class="pw"><use href="#spiral"/></svg></div>
      <div class="prop"><svg><use href="#watch"/></svg><span>X Rotation</span><b>0 <s>x</s>+0.0 <s>°</s></b><svg class="pw"><use href="#spiral"/></svg></div>
      <div class="prop"><svg><use href="#watch"/></svg><span>Y Rotation</span><b>0 <s>x</s>+0.0 <s>°</s></b><svg class="pw"><use href="#spiral"/></svg></div>
      <div class="prop grp off"><svg><use href="#chev-r"/></svg><span>Geometry Options</span><b>Change Renderer...</b></div>
      <div class="prop grp"><svg><use href="#chev-r"/></svg><span>Material Options</span></div>
      <div class="layer"><svg class="cv"><use href="#chev-d"/></svg><i class="lab"></i><span class="n">2</span><i class="col c2"></i><span class="name">Right</span><span class="sws"><i><svg><use href="#shy"/></svg></i><i></i><i><svg><use href="#slash"/></svg></i><u></u><u></u><i></i><i></i><i class="cb"><svg><use href="#cube"/></svg></i></span><span class="sp"><svg><use href="#spiral"/></svg></span><span class="par">None<svg><use href="#chev-d"/></svg></span><span class="avs"><i><svg><use href="#eye"/></svg></i><u></u><i></i><i></i></span></div>
      <div class="prop"><svg><use href="#watch"/></svg><span>Position</span><b>1095.0 <s>,</s>405.0 <s>,</s>0.0</b><svg class="pw"><use href="#spiral"/></svg></div>
      <div class="prop"><svg><use href="#watch"/></svg><span>Orientation</span><b>0.0<s> °,</s>0.0<s> °,</s>0.0<s> °</s></b><svg class="pw"><use href="#spiral"/></svg></div>
      <div class="prop"><svg><use href="#watch"/></svg><span>X Rotation</span><b>0 <s>x</s>+0.0 <s>°</s></b><svg class="pw"><use href="#spiral"/></svg></div>
      <div class="prop"><svg><use href="#watch"/></svg><span>Y Rotation</span><b>0 <s>x</s>+0.0 <s>°</s></b><svg class="pw"><use href="#spiral"/></svg></div>
      <div class="prop grp off"><svg><use href="#chev-r"/></svg><span>Geometry Options</span><b>Change Renderer...</b></div>
      <div class="prop grp"><svg><use href="#chev-r"/></svg><span>Material Options</span></div>
      <div class="layer"><svg class="cv"><use href="#chev-d"/></svg><i class="lab"></i><span class="n">3</span><i class="col c3"></i><span class="name">Left</span><span class="sws"><i><svg><use href="#shy"/></svg></i><i></i><i><svg><use href="#slash"/></svg></i><u></u><u></u><i></i><i></i><i class="cb"><svg><use href="#cube"/></svg></i></span><span class="sp"><svg><use href="#spiral"/></svg></span><span class="par">None<svg><use href="#chev-d"/></svg></span><span class="avs"><i><svg><use href="#eye"/></svg></i><u></u><i></i><i></i></span></div>
      <div class="prop"><svg><use href="#watch"/></svg><span>Position</span><b>825.0 <s>,</s>405.0 <s>,</s>0.0</b><svg class="pw"><use href="#spiral"/></svg></div>
      <div class="prop"><svg><use href="#watch"/></svg><span>Orientation</span><b>0.0<s> °,</s>0.0<s> °,</s>0.0<s> °</s></b><svg class="pw"><use href="#spiral"/></svg></div>
      <div class="prop"><svg><use href="#watch"/></svg><span>X Rotation</span><b>0 <s>x</s>+0.0 <s>°</s></b><svg class="pw"><use href="#spiral"/></svg></div>
      <div class="prop"><svg><use href="#watch"/></svg><span>Y Rotation</span><b>0 <s>x</s>+0.0 <s>°</s></b><svg class="pw"><use href="#spiral"/></svg></div>
      <div class="prop grp off"><svg><use href="#chev-r"/></svg><span>Geometry Options</span><b>Change Renderer...</b></div>
      <div class="prop grp"><svg><use href="#chev-r"/></svg><span>Material Options</span></div>
      <div class="layer"><svg class="cv"><use href="#chev-d"/></svg><i class="lab"></i><span class="n">4</span><i class="col c4"></i><span class="name">Bottom 2</span><span class="sws"><i><svg><use href="#shy"/></svg></i><i></i><i><svg><use href="#slash"/></svg></i><u></u><u></u><i></i><i></i><i class="cb"><svg><use href="#cube"/></svg></i></span><span class="sp"><svg><use href="#spiral"/></svg></span><span class="par">None<svg><use href="#chev-d"/></svg></span><span class="avs"><i><svg><use href="#eye"/></svg></i><u></u><i></i><i></i></span></div>
    </div>
    <div class="tfoot"><span class="fi on"><svg><use href="#copyb"/></svg></span><span class="fi"><svg><use href="#over"/></svg></span><span class="fi"><svg><use href="#brace"/></svg></span><span class="fi"><svg><use href="#snail"/></svg></span><span class="frt">Frame Render Time:</span><span class="ms">0ms</span><span class="toggle">Toggle Switches / Modes</span></div>
  </div>
  <div class="tright">
    <div class="navbar"><i></i><span></span><i class="r"></i></div>
    <div class="ruler"><span class="first">0000</span><span>00005</span><span>00010</span><span>00015</span><span>00020</span><span>00025</span><span>00030</span><span>00035</span><span>00040</span><span>00045</span><span>00050</span><span>00055</span><span>00060</span><span>00065</span><span>00070</span><span>00075</span><span>00080</span><span>00085</span><span>00090</span><span>00095</span><span>00100</span><span>00105</span><span>00110</span><span>00115</span><span class="last">0012</span></div>
    <div class="workbar"><i></i><span></span><i class="r"></i></div>
    <div class="cache"></div>
    <div class="tracks">
      <div class="bar"></div><div class="tk"></div><div class="tk"></div><div class="tk"></div><div class="tk"></div><div class="tk"></div><div class="tk"></div>
      <div class="bar"></div><div class="tk"></div><div class="tk"></div><div class="tk"></div><div class="tk"></div><div class="tk"></div><div class="tk"></div>
      <div class="bar"></div><div class="tk"></div><div class="tk"></div><div class="tk"></div><div class="tk"></div><div class="tk"></div><div class="tk"></div>
      <div class="bar"></div>
    </div>
    <svg class="zoomer" viewBox="0 0 108 15"><path d="M6 10l3-4 2 1.500L13 4l3 6zM87 11l5-6 1 2-2 4zM90 11l7-9 7 9z" class="f"/><path d="M35 8h41" stroke="#3c3c3c" stroke-width="3"/><circle cx="32" cy="9" r="4" fill="#232323" stroke="#aaa" stroke-width="1.800"/></svg>
    <i class="playline"></i>
    <svg class="playhead" viewBox="0 0 12 15"><path d="M0 0h12v7.500L6 14 0 7.500z" fill="#2d8ceb"/><path d="M4 6.500h4M6 6.500V14" stroke="#123"/></svg>
  </div>
  <div class="tgutter">
    <svg class="mk" viewBox="0 0 12 14"><path d="M1 0h10v9l-5 5-5-5z" class="f"/></svg>
    <svg class="mk2" viewBox="0 0 14 13"><path d="M7 3h7v7H7z" class="f"/><path d="M7.500 1L1 7h5" class="s w15"/><circle cx="6" cy="9" r="2.800" fill="#232323" stroke="#aaa" stroke-width="1.300"/></svg>
    <div class="vtrack"><i></i></div>
  </div>
</section>
</body>
</html>
```
FILE: styles.css
```css
* { box-sizing: border-box; }
body { margin: 0; width: 2560px; height: 1400px; overflow: hidden; background: #171717; color: #a6a6a6; font: 11px/14px "Noto Sans CJK JP", "Noto Sans", sans-serif; display: flex; flex-direction: column; white-space: nowrap; }
.defs { position: absolute; width: 0; height: 0; }
svg { display: block; width: 18px; height: 18px; flex: none; overflow: visible; }
.s { fill: none; stroke: currentColor; stroke-width: 1; }
.w12 { stroke-width: 1.2; } .w15 { stroke-width: 1.5; } .w2 { stroke-width: 2; }
.f { fill: currentColor; }
i, em { font-style: normal; } b { font-weight: normal; color: #2d8ceb; } s { text-decoration: none; }
.blue { color: #2d8ceb; }
.grow, .fillspace { flex: 1; }

.titlebar { height: 23px; background: #6b69d6; display: flex; align-items: center; padding-left: 2px; color: #fff; font: 12px/16px "Open Sans", sans-serif; flex: none; }
.ae { width: 16px; height: 16px; margin-top: -2px; border-radius: 3px; background: #00005b; color: #b0a8ff; font: bold 9px/15px "Liberation Sans", sans-serif; text-align: center; }
.title { margin-left: 5px; width: 1185px; letter-spacing: -.4px; padding-top: 1px; }
.topmark { width: 193px; height: 1px; background: #1c1c1c; align-self: flex-start; }
.winbtns { width: 110px; height: 20px; margin-left: auto; margin-right: 15px; margin-top: -3px; }
.menubar { height: 20px; background: #fff; border-bottom: 2px solid #f0f0f0; display: flex; align-items: center; padding: 1px 0 0 7px; color: #000; font: 12px/16px "Open Sans", sans-serif; letter-spacing: -.3px; flex: none; }
.menubar .m1 { width: 32px; } .m2 { width: 34px; } .m3 { width: 83px; } .m4 { width: 42px; } .m5 { width: 44px; } .m6 { width: 70px; } .m7 { width: 39px; } .m8 { width: 58px; }

.toolbar { height: 25px; background: #232323; display: flex; align-items: center; flex: none; color: #a9a9a9; margin-bottom: 2px; }
.grip { width: 3px; height: 19px; margin-left: 5px; background: repeating-linear-gradient(#3a3a3a 0 1px, #1b1b1b 1px 2px); }
.tool { width: 25px; height: 23px; display: flex; align-items: center; justify-content: center; flex: none; }
.tool svg { width: 16px; height: 16px; margin-top: -1px; }
.tool.first { margin-left: 3px; }
.tool.on { background: #171717; color: #2d8ceb; border: 1px solid #2e2e2e; border-radius: 3px; width: 23px; margin: 0 1px; }
.tool.sm { width: 23px; } .tool.sm.on { width: 21px; }
.sep { width: 1px; height: 21px; margin: 0 3px; background: #161616; flex: none; }
.sep.far { margin: 0 19px 0 23px; height: 25px; width: 2px; } .sep.mid { margin: 0 4px 0 7px; }
.tlabel { color: #848484; width: 55px; padding-left: 2px; }
.check { width: 14px; height: 14px; border: 2px solid #888; border-radius: 3px; margin-left: 4px; }
.snapl { width: 54px; padding-left: 3px; }
.spaces { margin-left: auto; width: 688px; border-left: 1px solid #161616; height: 23px; display: flex; align-items: center; padding-left: 22px; color: #868686; flex: none; }
.spaces .w1 { width: 82px; } .w2 { width: 83px; } .w3 { width: 73px; } .w4 { width: 110px; } .w5 { width: 89px; } .w6 { width: 88px; } .w7 { width: 87px; } 
.spaces .more { font-size: 20px; margin-left: 14px; margin-top: -5px; color: #a9a9a9; }
.wsi { border-left: 2px solid #161616; padding: 3px 0 0 5px; height: 25px; width: 37px; }
.wsi svg { width: 19px; height: 19px; }
.helpbox { width: 193px; height: 20px; border: 1px solid #2f2f2f; border-radius: 3px; background: #171717; margin-right: 6px; display: flex; align-items: center; padding-left: 3px; gap: 7px; font-size: 11px; flex: none; }

.work { height: 851px; display: flex; gap: 4px; margin-bottom: 4px; flex: none; }
.panel { background: #232323; display: flex; flex-direction: column; flex: none; }
.tabs { height: 29px; display: flex; align-items: center; color: #c8c8c8; flex: none; padding-bottom: 3px; }
.tabs .icon { color: #a9a9a9; }
.icon.cx, .ttab .cx { color: #888; }
.searchbox { border: 1px solid #2f2f2f; border-radius: 3px; background: #171717; height: 20px; display: flex; align-items: center; padding-left: 4px; flex: none; }
.sw { display: block; width: 9px; height: 9px; flex: none; } .sw.big { width: 10px; height: 10px; margin-top: -1px; }
.tan { background: #ad9873; } .yel { background: #e6da4b; } .red { background: #b33a3a; }

.project { width: 321px; border-left: 2px solid #171717; }
.project .pl { width: 42px; margin-left: 12px; letter-spacing: -.1px; } .project .tabs .icon { margin-left: 0; }
.project .searchbox { margin: 110px 6px 5px; }
.pgrid { display: grid; grid-template-columns: 16px 84px 18px 21px 76px 48px 51px 1fr; align-items: center; }
.phead { border-top: 1px solid #000; border-bottom: 1px solid #000; height: 20px; color: #999; letter-spacing: -.15px; }
.phead .vb { border-left: 1px solid #101010; padding-left: 4px; height: 13px; display: flex; align-items: center; }
.phead svg { width: 14px; height: 14px; color: #b4b4b4; } 
.sort { display: block; border: 6px solid transparent; border-top: 0; border-bottom: 5px solid #2d8ceb; width: 0; margin-left: 1px; }
.prow { height: 19px; border-bottom: 1px solid #1f1f1f; padding-top: 1px; letter-spacing: -.1px; }
.prow svg { color: #b0b0b0; }
.prow .cr { margin-left: -4px; }
.nm { display: flex; align-items: center; gap: 4px; } .s14 { width: 16px; height: 16px; }
.ctr { padding-left: 5px; } .ty { padding-left: 7px; color: #8c8c8c; } .num { padding-left: 6px; color: #8c8c8c; margin-top: -2px; }
.prow span:last-child svg { width: 14px; height: 14px; margin-left: -10px; }
.pfoot { border-top: 1px solid #000; height: 18px; display: flex; align-items: center; padding-left: 3px; color: #b0b0b0; }
.pfoot svg { width: 17px; height: 14px; margin: 0 8px 2px 0; }
.bpc { width: 47px; height: 17px; line-height: 15px; border: 1px solid #2f2f2f; background: #1d1d1d; border-radius: 3px; text-align: center; color: #999; margin: 0 2px 0 -3px; font-size: 10px; letter-spacing: -.2px; }
.ptrack { width: 128px; height: 17px; background: #1f1f1f; } .ptrack i { display: block; width: 41px; height: 16px; border-radius: 8px; background: #323232; }

.effctl { width: 360px; }
.effctl .cx { margin: 0 0 0 4px; } .comp .cx { margin-left: 3px; }
.tabs .cx + .sw { margin-left: 4px; } .tabs .lk { margin-left: 6px; } .tabs .t { margin-left: 5px; letter-spacing: -.25px; } .tabs .t b { margin-left: 1px; }
.tabs .t + .icon { margin-left: 5px; }
.ecsub { height: 19px; line-height: 16px; padding-left: 6px; border-bottom: 1px solid #000; color: #999; }

.comp { width: 1439px; border: 1px solid #2d8ceb; }
.comp .tabs { height: 28px; }
.csub { height: 25px; border-bottom: 2px solid #0a0a0a; padding: 2px 0 0 18px; }
.csub span { display: block; width: 72px; height: 18px; border: 1px solid #2c2c2c; border-radius: 3px; background: #191919; color: #2d8ceb; padding-left: 9px; line-height: 15px; }
.views { display: grid; grid-template-columns: 719px 718px; grid-template-rows: 386px 388px; }
.view { width: 719px; height: 100%; overflow: hidden; }
.views > .view:last-child { width: 717px; }
.topview { height: 384px; background: conic-gradient(#ccc 25%, #fff 0 50%, #ccc 0 75%, #fff 0) -2px 2px / 16px 16px; }
.topview .view { width: 717px; height: 384px; }
.edge { fill: none; stroke: #b33636; stroke-width: 1.3; stroke-opacity: .85; }
.lime { fill: #c4ff7c; } .pink { fill: #ff7f7f; } .peri { fill: #7f7fff; }
.g1, .r1, .b1, .g2, .r2, .b2, .g3, .r3, .b3 { fill: none; }
.g1, .g2, .g3 { stroke: #22bb09; } .r1, .r2, .r3 { stroke: #e62c2c; } .b1, .b2, .b3 { stroke: #2c2ce0; }
.g1, .r1, .b1 { stroke-width: 1.2; } .g2, .r2, .b2 { stroke-width: 2.3; } .g3, .r3, .b3 { stroke-width: 2.8; } .thick { stroke-width: 4; }
.ax { font: 12px "Liberation Sans", sans-serif; text-anchor: middle; }
.vname { fill: #dcdcdc; font-size: 11px; stroke: #dcdcdc; stroke-width: .3; } .ac { letter-spacing: -.15px; } .vdark { fill: #333; font-size: 10.500px; letter-spacing: -.3px; }
.vfoot { height: 22px; border-top: 1px solid #171717; display: flex; align-items: center; padding: 0 3px 1px 4px; color: #a9a9a9; }
.sel { height: 18px; border: 1px solid #2c2c2c; border-radius: 3px; background: #1d1d1d; display: flex; align-items: center; justify-content: space-between; padding: 0 0 0 6px; flex: none; }
.vfoot .sep { height: 15px; margin: 0 5px; }
.s50 { width: 69px; } .sh { width: 85px; } .frame { width: 69px; padding: 0; justify-content: center; color: #8e8e8e; }
.vi { width: 21.500px; height: 19px; display: flex; align-items: center; justify-content: center; flex: none; } .vi svg { width: 15px; height: 15px; }
.vi.dk { background: #171717; } .vi.on { background: #171717; color: #2d8ceb; border: 1px solid #2a2a2a; }
.vi.dim { color: #3c3c3c; } .vi.dimb { color: #1c3654; } .exp { width: 33px; padding-left: 2px; letter-spacing: -.2px; }
.d3 { width: 78px; justify-content: flex-start; gap: 6px; color: #8e8e8e; padding-left: 5px; } .d3 svg { width: 17px; }
.c3 { width: 87px; } .tp { width: 106px; } .v4 { width: 70px; }

.effects { width: 206px; margin-left: 0; }
.effects .pl { margin-left: 12px; width: 90px; color: #b8b8b8; letter-spacing: -.1px; }
.effects .searchbox { margin: 0 5px 2px; }
.effects ul { margin: 0; padding: 0; list-style: none; border-top: 1px solid #000; }
.effects li { height: 17px; width: 187px; margin-left: 1px; border-bottom: 1px solid #1e1e1e; background: #262626; display: flex; align-items: center; letter-spacing: -.05px; }
.effects li svg { width: 16px; height: 16px; margin: 0 -1px 0 0; }
.efoot { width: 188px; height: 18px; border-top: 1px solid #000; border-right: 1px solid #000; padding: 3px 0 0 167px; color: #b0b0b0; } .efoot svg { width: 14px; height: 12px; }

.side { width: 217px; padding-right: 12px; }
.acc { height: 30px; border-bottom: 2px solid #181818; padding: 0 0 2px 12px; color: #8c8c8c; flex: none; display: flex; align-items: center; justify-content: space-between; letter-spacing: -.05px; }
.acc.open { border: 0; color: #b0b0b0; padding-right: 5px; padding-bottom: 4px; height: 30px; }
.char { height: 224px; padding: 5px 4px 0 6px; border-bottom: 2px solid #181818; }
.fontpick { display: flex; height: 44px; }
.fonts { display: grid; gap: 5px; width: 122px; }
.fbox { height: 19.500px; border: 1px solid #2d2d2d; border-radius: 3px; background: #171717; display: flex; justify-content: space-between; align-items: center; padding-left: 7px; color: #b0b0b0; }
.fbox svg { border-left: 1px solid #2d2d2d; }
.dropcol { width: 30px; padding-left: 5px; } .bw { display: block; width: 20px; height: 17px; margin-top: 8px; border: 1px solid #aaa; background: linear-gradient(#000 50%, #fff 50%); }
.swatches { width: 45px; height: 44px; }
.char hr { border: 0; border-top: 2px solid #323232; margin: 4px 2px 2px 0; }
.crow { display: grid; grid-template-columns: 25px 43px 38px 32px 43px 1fr; align-items: center; height: 21px; color: #858585; }
.crow svg { width: 17px; height: 17px; color: #b0b0b0; } .crow > span:not(.wide) { margin-top: -2px; letter-spacing: -.1px; }
.crow i { border: 3.5px solid transparent; border-bottom: 0; border-top: 7px solid #8e8e8e; width: 0; }
.crow .dimt { color: #444; }
.crow.tall { height: 23px; grid-template-columns: 25px 43px 13px 115px; }
.wide { height: 19px; border: 1px solid #2d2d2d; border-radius: 3px; background: #1e1e1e; display: flex; justify-content: flex-end; align-items: center; }
.tstyles { display: flex; padding: 5px 0 0 19px; height: 24px; align-items: center; font: 14px/16px "Liberation Serif", serif; color: #b8b8b8; }
.tstyles span { width: 25px; text-align: center; } .tstyles .caps { width: 27px; letter-spacing: -.2px; } .tstyles .aa { margin-left: 4px; } .tstyles .su { margin-left: 4px; } .bd { font-weight: bold; } .it { font-style: italic; } .tstyles small { font-size: 10px; } .tstyles sup, .tstyles sub { font-size: 8px; line-height: 0; }

.timeline { flex: none; height: 472px; display: flex; background: #232323; }
.tleft { width: 534px; border-left: 2px solid #171717; display: flex; flex-direction: column; }
.ttabs { height: 28px; display: flex; color: #8c8c8c; padding-left: 27px; }
.rq { width: 111px; line-height: 28px; letter-spacing: -.1px; }
.ttab { display: flex; align-items: center; width: 94px; height: 26px; border-bottom: 2px solid #b8b8b8; color: #c8c8c8; padding-top: 2px; letter-spacing: -.1px; }
.ttab .cx { margin-left: -7px; margin-right: 4px; } .ttab > span { width: 48px; margin-left: 12px; } 
.tctl { height: 35px; display: flex; align-items: flex-start; color: #a9a9a9; }
.time { width: 126px; text-align: center; color: #1d5a9c; padding-right: 0; }
.time strong { display: block; font-size: 15px; line-height: 18px; color: #2d8ceb; margin-top: 2px; } .time small { display: block; font-size: 10.500px; line-height: 11px; letter-spacing: -.05px; }
.tctl .searchbox { width: 239px; margin-top: 7px; margin-right: 14px; }
.tctl > svg { margin-top: 8px; width: 17px; height: 17px; } .k2 { margin-left: 17px; } .k3 { margin-left: 9px; } .k4 { margin-left: 9px; } .k5 { margin-left: 17px; }
.lgrid { display: grid; grid-template-columns: 32px 32px 131px 137px 117px 67px 1fr; height: 20px; border-top: 1px solid #000; border-bottom: 1px solid #000; align-items: center; color: #9c9c9c; letter-spacing: -.15px; }
.lgrid .vb { border-left: 1px solid #0c0c0c; height: 12px; display: flex; align-items: center; padding-left: 5px; }
.lgrid svg { width: 15px; height: 15px; color: #b4b4b4; } .tagc { padding-left: 11px; }
.lgrid em { font: italic 14px "Liberation Serif", serif; width: 15px; text-align: center; color: #b4b4b4; }
.lgrid .cells { padding-left: 2px; } .lgrid .av { padding-left: 2px; }
.rows { height: 373px; overflow: hidden; }
.layer { height: 17px; background: #474747; border-bottom: 1px solid #1b1b1b; display: flex; align-items: center; color: #b4b4b4; }
.layer .cv { width: 17px; } .lab { width: 12px; height: 12px; background: #b33939; } .n { width: 24px; text-align: center; color: #b8b8b8; margin-top: -2px; }
.col { width: 14px; height: 14px; border: 1px solid #000; margin: 0 2px 0 14px; } .c1.col { background: #ff3a3a; } .c2.col { background: #00ff12; } .c3.col { background: #0012ff; } .c4.col { background: #00f0ff; }
.c3.col { width: 14px; }
.name { width: 111px; height: 16px; background: #a0a0a0; color: #1c1c1c; padding-left: 4px; line-height: 15px; font-size: 11.500px; margin-right: 4px; }
.sws, .avs { display: flex; } .sws { width: 120px; margin-right: 14px; } .avs { margin-left: 8px; }
.sws i, .avs i { width: 13px; height: 13px; margin: 0 1px; background: #333; } .sws u, .avs u { width: 15px; }
.sws svg, .avs svg { width: 15px; height: 15px; margin: -1px; }
.sws .cb { border: 1px solid #aaa; border-width: 0 1px; height: 15px; margin: -1px 1px; background: #2a2a2a; } .sws .cb svg { margin: 0 -2px; }
.sp { width: 22px; height: 16px; background: #3a3a3a; display: flex; align-items: center; } .sp svg { width: 17px; height: 17px; margin-left: 1px; }
.par { width: 89px; height: 16px; margin-left: 1px; background: #1e1e1e; display: flex; justify-content: space-between; align-items: center; padding: 0 0 1px 7px; font-size: 11.500px; }
.prop { height: 17px; background: #262626; border-bottom: 1px solid #1b1b1b; display: flex; align-items: center; padding-left: 50px; }
.prop svg { width: 17px; height: 17px; color: #b0b0b0; } .prop > span { width: 128px; padding-left: 5px; }
.prop b { width: 146px; margin-top: -2px; padding-left: 0; letter-spacing: -.2px; margin-left: 5px; } .prop s { color: #8c8c8c; } .prop .pw { margin-top: -2px; width: 18px; height: 18px; }
.prop.grp { padding-left: 16px; } .prop.grp > span { width: 162px; padding-left: 6px; letter-spacing: -.05px; } .prop.grp b { margin-left: 5px; letter-spacing: -.1px; } .off > span { color: #4f4f4f; }
.tfoot { height: 16px; border-top: 1px solid #000; display: flex; align-items: center; color: #a4a4a4; font-size: 11px; }
.fi { width: 19px; height: 15px; display: flex; justify-content: center; align-items: center; } .fi svg { width: 12px; height: 12px; } .fi.on { color: #2d8ceb; margin-left: 3px; background: #191919; width: 20px; }
.frt { width: 106px; margin-left: 25px; } .ms { width: 51px; color: #5cd6a8; font-weight: bold; letter-spacing: -.4px; } .toggle { width: 134px; border: 1px solid #2e2e2e; border-radius: 2px; line-height: 14px; height: 16px; text-align: center; }

.tright { width: 2007px; position: relative; overflow: hidden; padding-top: 33px; border-left: 1px solid #000; }
.navbar, .workbar { display: flex; border: 1px solid #000; border-width: 1px 0; }
.navbar { height: 10px; } .workbar { height: 17px; }
.navbar span { width: 1992px; background: #666; border: 1px solid #000; border-width: 0 1px; } .workbar span { width: 1992px; background: #5e5e5e; border-right: 1px solid #000; border-left: 1px solid #000; }
.navbar i, .workbar i { width: 7px; background: #2d8ceb; border-radius: 6px 0 0 6px; } .navbar i.r, .workbar i.r { border-radius: 0 6px 6px 0; }
.workbar i { border-radius: 3px 0 0 3px; width: 5px; margin-left: 2px; } .workbar i.r { width: 5px; margin-left: 0; }
.ruler { height: 20px; display: flex; margin-left: -34.500px; color: #a0a0a0; font-size: 10px; line-height: 12px; }
.ruler span { width: 83px; flex: none; text-align: center; background: linear-gradient(#8a8a8a, #8a8a8a) 41.500px 100% / 1px 5px no-repeat; }
.ruler .first { padding-left: 7px; } .ruler .last { padding-right: 9px; }
.cache { height: 3px; background: #10c01e; margin: 0 7px; width: 1992px; box-shadow: 0 1px #000; margin-bottom: 0; }
.tracks { height: 373px; overflow: hidden; }
.bar, .tk { height: 17px; border-bottom: 1px solid #1b1b1b; padding: 0; }
.bar { background: linear-gradient(#4a4a4a, #4a4a4a); } 
.bar::before { content: ""; display: block; width: 1992px; height: 16px; margin-left: 7px; border-top: 1px solid #c58d8d; border-left: 1px solid #d09c9c; background: repeating-linear-gradient(90deg, rgba(0,0,0,.05) 0 1px, transparent 1px 3px), linear-gradient(#b04c4c, #964040); }
.tk { background: linear-gradient(90deg, #242424 7px, #343434 7px 1983px, #4c4c4c 1983px 1999px, #242424 1999px); display: flex; justify-content: flex-end; align-items: center; }
.tk::after { content: ""; width: 7px; height: 11px; margin-right: 20px; border: 1px solid #a0a0a0; border-width: 1px 0; background: linear-gradient(#a0a0a0, #a0a0a0) 50% 0 / 3px 100% no-repeat; }
.zoomer { width: 108px; height: 16px; border-top: 1px solid #000; }
.playline { position: absolute; left: 1982px; top: 60px; width: 1px; height: 396px; background: #2d8ceb; }
.playhead { position: absolute; left: 1977px; top: 48px; width: 12px; height: 15px; }
.tgutter { width: 18px; background: #232323; padding-top: 65px; border-left: 1px solid #1a1a1a; color: #aaa; }
.mk { width: 12px; height: 14px; margin-left: 3px; } .mk2 { width: 14px; height: 13px; margin: 7px 0 2px 1px; }
.vtrack { height: 355px; background: #1c1c1c; } .vtrack i { display: block; width: 15px; height: 185px; border-radius: 8px; background: #323232; }
```
